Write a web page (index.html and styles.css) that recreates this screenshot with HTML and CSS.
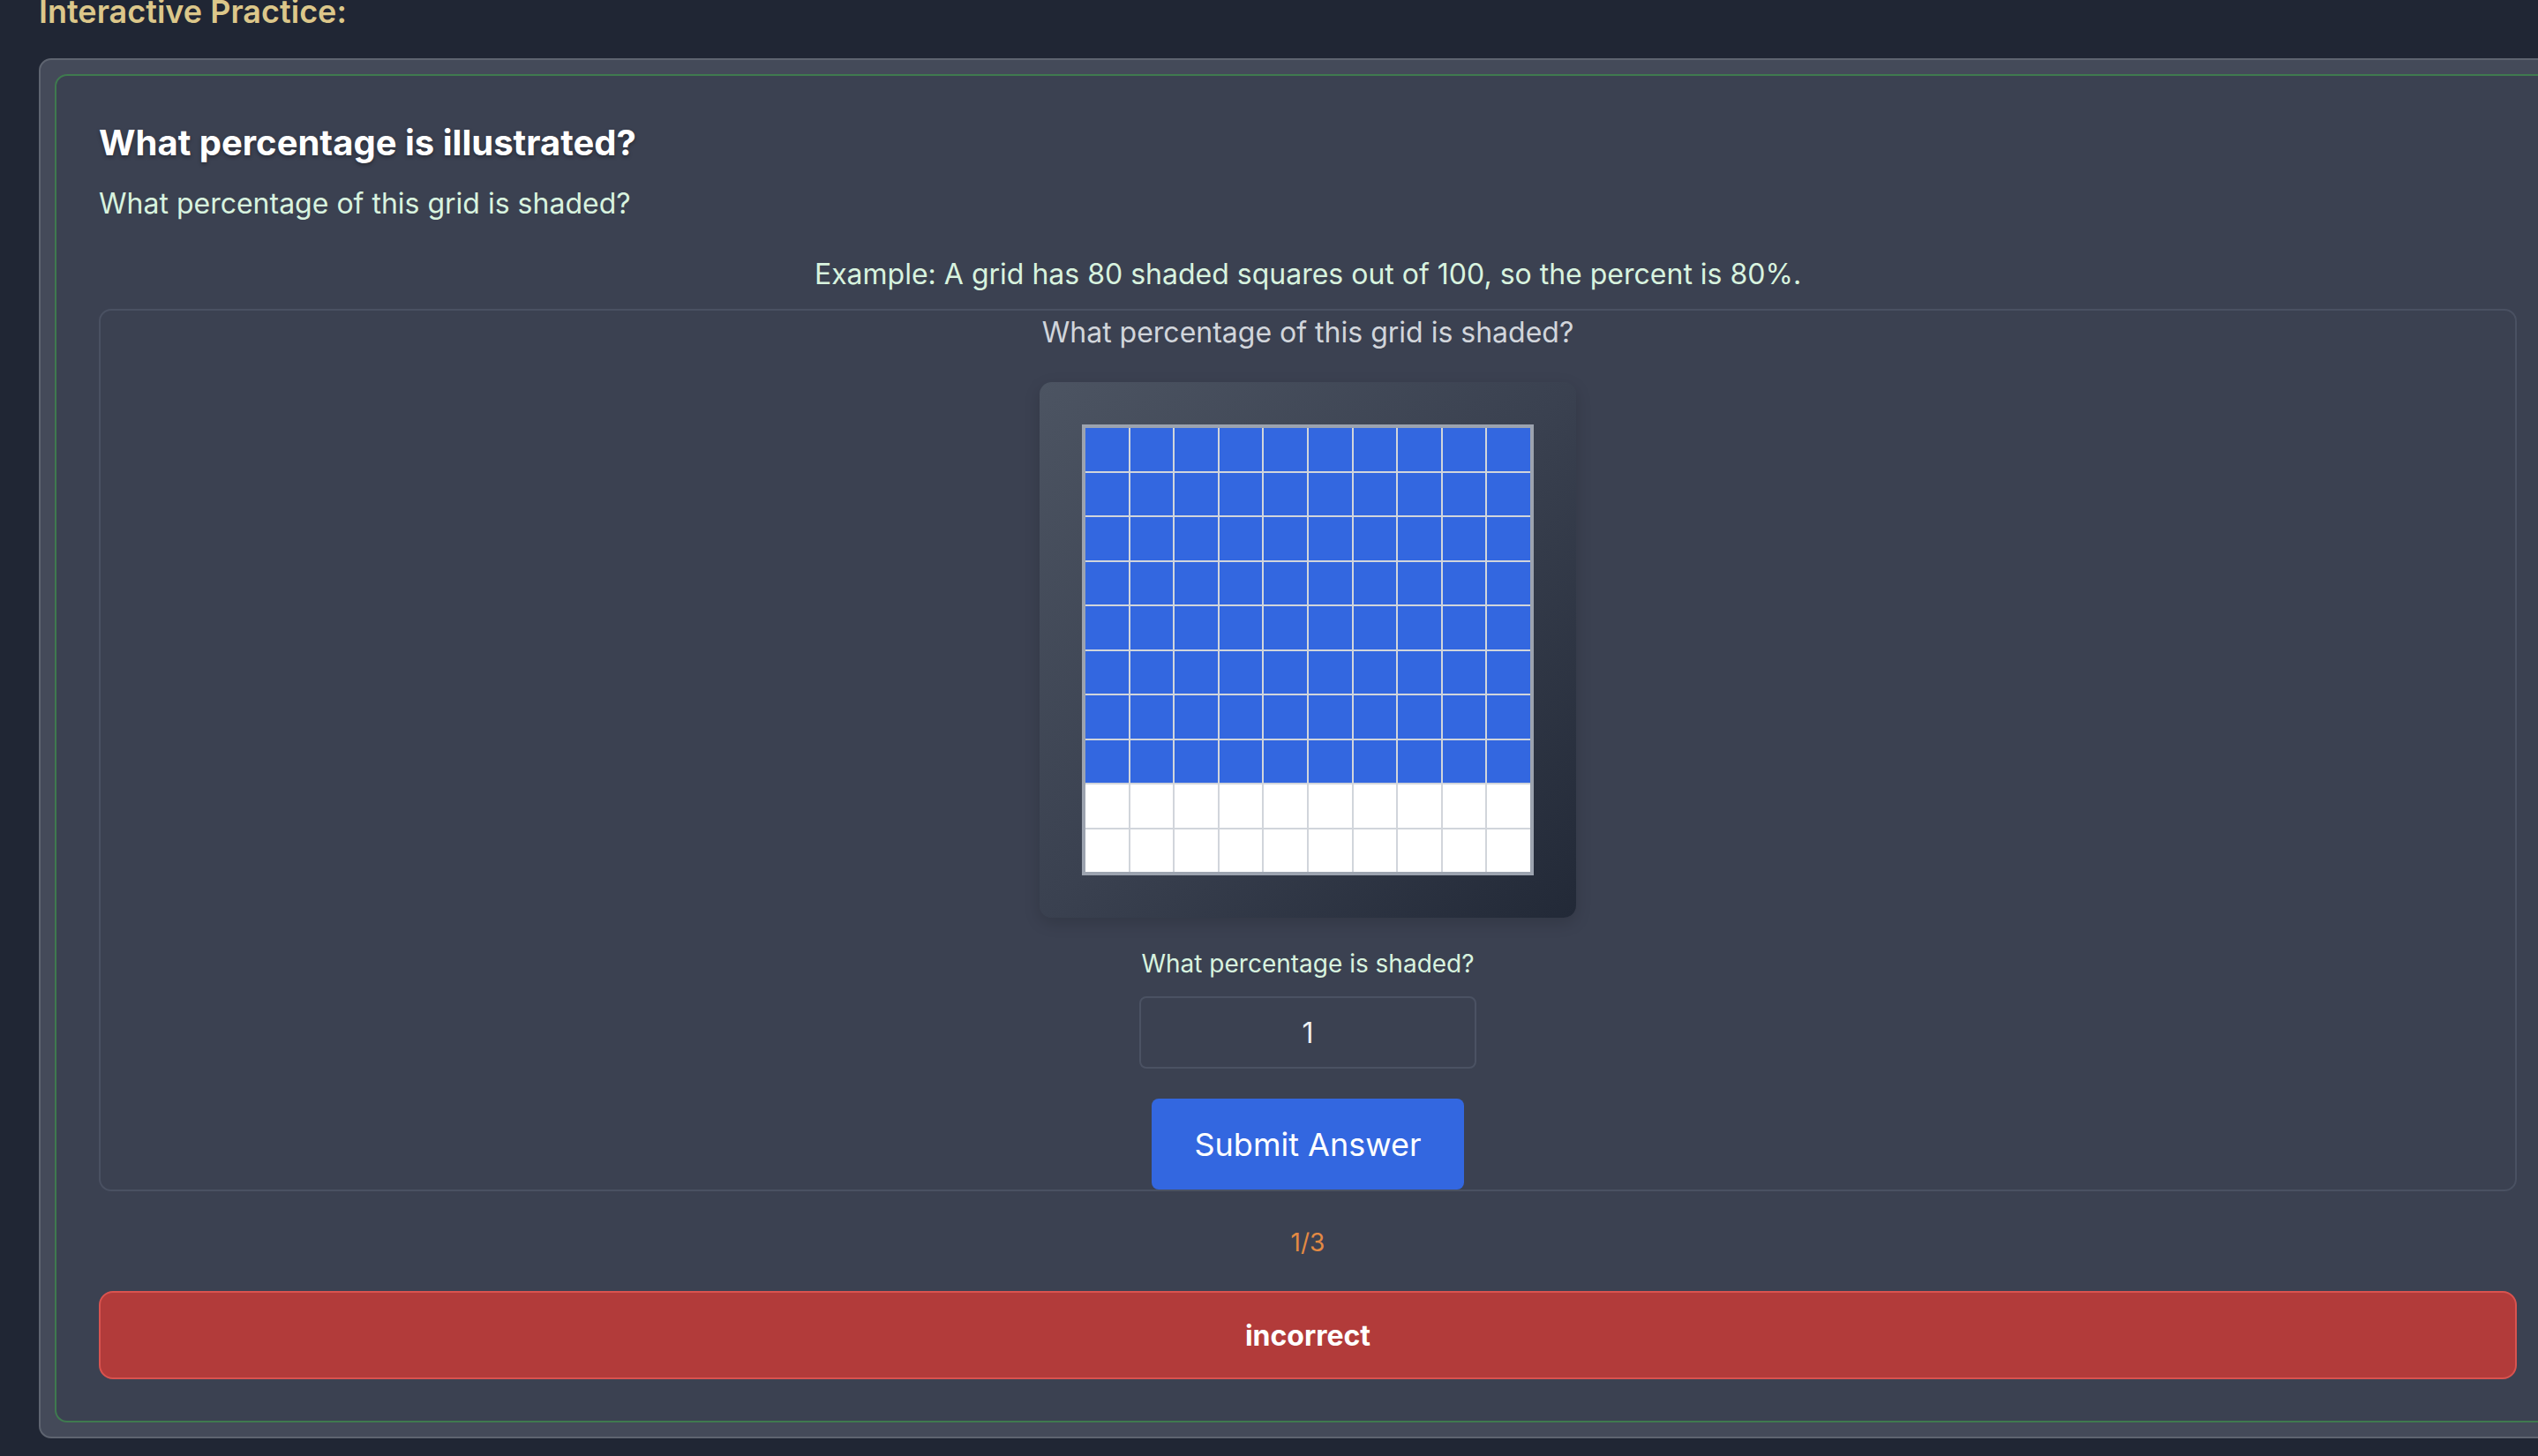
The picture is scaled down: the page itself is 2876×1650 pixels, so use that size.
FILE: index.html
```html
<!DOCTYPE html>
<html lang="en">
<head>
<meta charset="utf-8">
<title>Interactive Practice</title>
<link rel="stylesheet" href="styles.css">
</head>
<body>
<div class="page">
  <h2 class="section-title">Interactive Practice:</h2>
  <div class="outer-card">
    <div class="practice-card">
      <h3 class="q-title">What percentage is illustrated?</h3>
      <p class="q-sub">What percentage of this grid is shaded?</p>
      <p class="q-example">Example: A grid has 80 shaded squares out of 100, so the percent is 80%.</p>
      <div class="activity">
        <p class="activity-prompt">What percentage of this grid is shaded?</p>
        <div class="grid-frame">
          <div class="grid" id="grid">
            <span class="cell on"></span><span class="cell on"></span><span class="cell on"></span><span class="cell on"></span><span class="cell on"></span><span class="cell on"></span><span class="cell on"></span><span class="cell on"></span><span class="cell on"></span><span class="cell on"></span>
            <span class="cell on"></span><span class="cell on"></span><span class="cell on"></span><span class="cell on"></span><span class="cell on"></span><span class="cell on"></span><span class="cell on"></span><span class="cell on"></span><span class="cell on"></span><span class="cell on"></span>
            <span class="cell on"></span><span class="cell on"></span><span class="cell on"></span><span class="cell on"></span><span class="cell on"></span><span class="cell on"></span><span class="cell on"></span><span class="cell on"></span><span class="cell on"></span><span class="cell on"></span>
            <span class="cell on"></span><span class="cell on"></span><span class="cell on"></span><span class="cell on"></span><span class="cell on"></span><span class="cell on"></span><span class="cell on"></span><span class="cell on"></span><span class="cell on"></span><span class="cell on"></span>
            <span class="cell on"></span><span class="cell on"></span><span class="cell on"></span><span class="cell on"></span><span class="cell on"></span><span class="cell on"></span><span class="cell on"></span><span class="cell on"></span><span class="cell on"></span><span class="cell on"></span>
            <span class="cell on"></span><span class="cell on"></span><span class="cell on"></span><span class="cell on"></span><span class="cell on"></span><span class="cell on"></span><span class="cell on"></span><span class="cell on"></span><span class="cell on"></span><span class="cell on"></span>
            <span class="cell on"></span><span class="cell on"></span><span class="cell on"></span><span class="cell on"></span><span class="cell on"></span><span class="cell on"></span><span class="cell on"></span><span class="cell on"></span><span class="cell on"></span><span class="cell on"></span>
            <span class="cell on"></span><span class="cell on"></span><span class="cell on"></span><span class="cell on"></span><span class="cell on"></span><span class="cell on"></span><span class="cell on"></span><span class="cell on"></span><span class="cell on"></span><span class="cell on"></span>
            <span class="cell"></span><span class="cell"></span><span class="cell"></span><span class="cell"></span><span class="cell"></span><span class="cell"></span><span class="cell"></span><span class="cell"></span><span class="cell"></span><span class="cell"></span>
            <span class="cell"></span><span class="cell"></span><span class="cell"></span><span class="cell"></span><span class="cell"></span><span class="cell"></span><span class="cell"></span><span class="cell"></span><span class="cell"></span><span class="cell"></span>
          </div>
        </div>
        <label class="answer-label" for="answer">What percentage is shaded?</label>
        <input class="answer-input" id="answer" type="text" value="1">
        <button class="submit-btn" type="button">Submit Answer</button>
      </div>
      <p class="progress">1/3</p>
      <div class="feedback">incorrect</div>
    </div>
  </div>
</div>
</body>
</html>
```

FILE: styles.css
```css
html, body {
  margin: 0;
  padding: 0;
  overflow: hidden;
}
body {
  background: #202634;
  font-family: Inter, "Noto Sans", sans-serif;
  color: #e5e7eb;
  width: 2876px;
  height: 1650px;
}
.page {
  padding-left: 44px;
}
.section-title {
  margin: -8px 0 31px 0;
  font-size: 36px;
  line-height: 1.2;
  font-weight: 600;
  color: #dcc78a;
}
.outer-card {
  box-sizing: border-box;
  width: 2876px;
  background: #444a59;
  border: 2px solid #5e6470;
  border-radius: 14px;
  padding: 16px;
}
.practice-card {
  background: #3b4151;
  border: 2px solid #3f7a4f;
  border-radius: 14px;
  padding: 52px 48px 47px 48px;
  display: flex;
  flex-direction: column;
}
.q-title {
  margin: 0 0 21px 0;
  font-size: 40px;
  line-height: 48px;
  font-weight: 700;
  color: #ffffff;
  text-shadow: 0 2px 4px rgba(0, 0, 0, 0.35);
}
.q-sub {
  margin: 0;
  font-size: 32px;
  line-height: 48px;
  color: #d8f3df;
}
.q-example {
  margin: 32px 0 0 0;
  font-size: 32px;
  line-height: 48px;
  color: #d8f3df;
  text-align: center;
}
.activity {
  margin-top: 15px;
  border: 2px solid #4a5162;
  border-radius: 14px;
  padding: 2px 0 0 0;
  display: flex;
  flex-direction: column;
  align-items: center;
}
.activity-prompt {
  margin: 0;
  font-size: 32px;
  line-height: 45px;
  color: #d1d5db;
}
.grid-frame {
  margin-top: 34px;
  padding: 48px;
  border-radius: 14px;
  background: linear-gradient(135deg, #4c5462 0%, #3a4150 50%, #222937 100%);
  box-shadow: 0 6px 18px rgba(0, 0, 0, 0.15);
}
.grid {
  width: 504px;
  height: 503px;
  border: 4px solid #9ca3af;
  background: #d1d5db;
  display: grid;
  grid-template-columns: repeat(10, 1fr);
  grid-template-rows: repeat(10, 1fr);
  gap: 2px;
}
.cell {
  background: #ffffff;
}
.cell.on {
  background: #3367e0;
}
.answer-label {
  margin-top: 31px;
  font-size: 28px;
  line-height: 42px;
  color: #d8f3df;
}
.answer-input {
  box-sizing: border-box;
  margin-top: 16px;
  width: 382px;
  height: 82px;
  background: transparent;
  border: 2px solid #4b5263;
  border-radius: 8px;
  font-family: Inter, "Noto Sans", sans-serif;
  font-size: 32px;
  color: #eef0f3;
  text-align: center;
  outline: none;
}
.submit-btn {
  margin-top: 34px;
  width: 354px;
  height: 103px;
  border: none;
  border-radius: 8px;
  background: #3367e0;
  color: #ffffff;
  font-family: Inter, "Noto Sans", sans-serif;
  font-size: 36px;
  font-weight: 400;
  cursor: pointer;
}
.progress {
  margin: 37px 0 0 0;
  font-size: 28px;
  line-height: 42px;
  color: #e38a43;
  text-align: center;
}
.feedback {
  box-sizing: border-box;
  margin-top: 34px;
  height: 100px;
  background: #b23b3a;
  border: 2px solid #d9534f;
  border-radius: 16px;
  display: flex;
  align-items: center;
  justify-content: center;
  font-size: 32px;
  font-weight: 700;
  color: #ffffff;
}
```
